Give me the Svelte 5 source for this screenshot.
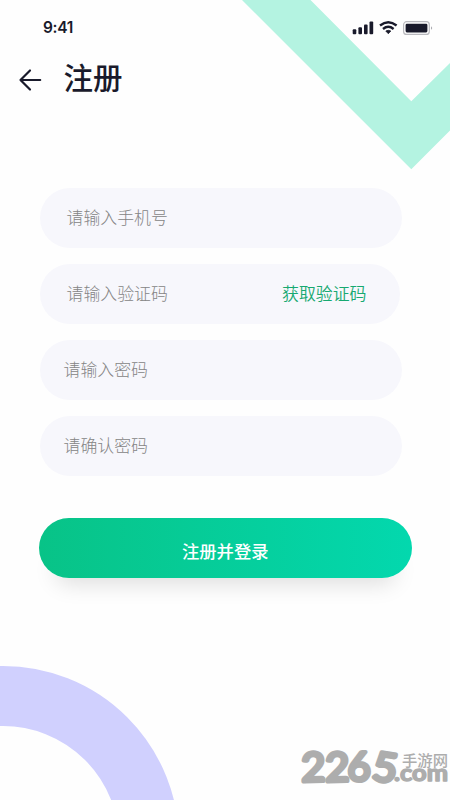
<script>
  const fields = [
    { id: 'phone', hint: '请输入手机号' },
    { id: 'code', hint: '请输入验证码', action: '获取验证码' },
    { id: 'password', hint: '请输入密码' },
    { id: 'confirm', hint: '请确认密码' }
  ];
</script>

<main class="screen">
  <svg class="decor" width="450" height="800" viewBox="0 0 450 800" aria-hidden="true">
    <path d="M242 0H310.500L411.300 101.300L450 63V130.500L411.300 169.300Z" fill="#b4f3e1" />
    <circle cx="3" cy="842" r="146" fill="none" stroke="#d0d0fe" stroke-width="60" />
  </svg>

  <header class="status">
    <span class="time">9:41</span>
    <svg class="signals" width="82" height="15" viewBox="0 0 82 15" aria-hidden="true">
      <g fill="#191a2b">
        <rect x="0.700" y="9.300" width="3.600" height="5" rx="1" />
        <rect x="6.400" y="7.300" width="3.600" height="7" rx="1" />
        <rect x="12" y="4.500" width="3.600" height="9.800" rx="1" />
        <rect x="17.500" y="1.600" width="3.700" height="12.700" rx="1" />
        <path d="M33.800 11Q36.300 9.600 38.800 11L36.300 13.700Z" stroke="#191a2b" stroke-width=".8" stroke-linejoin="round" />
      </g>
      <g fill="none" stroke="#191a2b" stroke-width="2.400">
        <path d="M28 5.500Q36.300 -1.100 44.600 5.500" />
        <path d="M31 9Q36.300 4.700 41.600 9" />
      </g>
      <rect x="51.600" y="1.700" width="25.700" height="12.700" rx="3" fill="#fff" stroke="#b9b9be" stroke-width="1.200" />
      <rect x="53.600" y="3.700" width="21.800" height="8.700" rx="1.300" fill="#191a2b" />
      <path d="M79 6.200Q81.400 8 79 9.700Z" fill="#aaaab0" />
    </svg>
  </header>

  <div class="titlebar">
    <svg width="24" height="24" viewBox="0 0 24 24" fill="none" stroke="#191a2b" stroke-width="2.200" stroke-linecap="round" stroke-linejoin="round" aria-hidden="true">
      <path d="M12 2.500L2.500 12L12 21.500M2.500 12H22.200" />
    </svg>
    <h1>注册</h1>
  </div>

  <form>
    {#each fields as field (field.id)}
      <div class="field {field.id}">
        <span>{field.hint}</span>
        {#if field.action}<button class="action" type="button">{field.action}</button>{/if}
      </div>
    {/each}
    <button class="submit" type="button">注册并登录</button>
  </form>

  <svg class="watermark" width="160" height="70" viewBox="290 730 160 70">
    <g fill="#adadad" stroke="#adadad" stroke-linejoin="round">
      <g class="digits" stroke-width="4">
        <text transform="translate(301.500 781.500) rotate(-1) scale(1.040 1)">2</text>
        <text transform="translate(325.500 781.500) rotate(-1) scale(1.040 1)">2</text>
        <text transform="translate(347.500 781)">6</text>
        <text transform="translate(371 779.500) rotate(9) scale(1.050 1)">5</text>
      </g>
      <text class="cn" x="402" y="766" textLength="46" stroke-width="0">手游网</text>
      <text class="com" x="394" y="781" textLength="54" lengthAdjust="spacingAndGlyphs" stroke-width="1.400">.com</text>
    </g>
  </svg>
</main>

<style>
  :global(body) { margin: 0; background: #fff; }
  .screen {
    position: relative;
    width: 450px;
    height: 800px;
    overflow: hidden;
    background: #fefefe;
    color: #191a2b;
    font-family: "Noto Sans CJK SC", sans-serif;
  }
  .decor { position: absolute; inset: 0; }
  .status {
    position: relative;
    display: flex;
    justify-content: space-between;
    align-items: flex-start;
    height: 56px;
    box-sizing: border-box;
    padding: 20px 16px 0 43px;
  }
  .time {
    font: 600 15.500px/16px Inter, sans-serif;
    letter-spacing: -0.300px;
  }
  .signals { display: block; }
  .titlebar {
    position: relative;
    display: flex;
    align-items: flex-start;
    gap: 21.500px;
    height: 46px;
    padding-left: 18px;
  }
  .titlebar svg { margin-top: 11.500px; }
  h1 { margin: 0; font-size: 29.500px; line-height: 40px; font-weight: 500; }
  form { position: relative; padding: 86px 38px 0 40px; }
  .field {
    display: flex;
    align-items: center;
    justify-content: space-between;
    box-sizing: border-box;
    width: 361.500px;
    height: 60px;
    margin-bottom: 16px;
    padding: 0 33px 2px 23.500px;
    border-radius: 30px;
    background: #f7f7fc;
    color: #858585;
    font-size: 16.900px;
    line-height: 24px;
    font-weight: 300;
  }
  .phone, .code { padding-left: 26.500px; }
  .code { width: 359.500px; }
  button { border: 0; padding: 0; font-family: inherit; }
  .action {
    background: none;
    color: #17a971;
    font-size: 16.900px;
    line-height: 24px;
    font-weight: 350;
  }
  .submit {
    display: block;
    width: 373.500px;
    height: 60px;
    margin: 42px 0 0 -1.500px;
    padding-top: 6px;
    border-radius: 30px;
    background: linear-gradient(90deg, #08c387, #03d8ae);
    box-shadow: 0 22px 22px -16px rgba(0, 0, 0, .13);
    color: #fff;
    font-size: 17.300px;
    line-height: 24px;
    font-weight: 500;
  }
  .watermark { position: absolute; left: 290px; top: 730px; }
  .digits { font: 400 40px "Lato", sans-serif; }
  .cn { font: 500 15.300px "Noto Sans CJK SC", sans-serif; }
  .com { font: 700 22.500px "Lato", sans-serif; }
</style>
